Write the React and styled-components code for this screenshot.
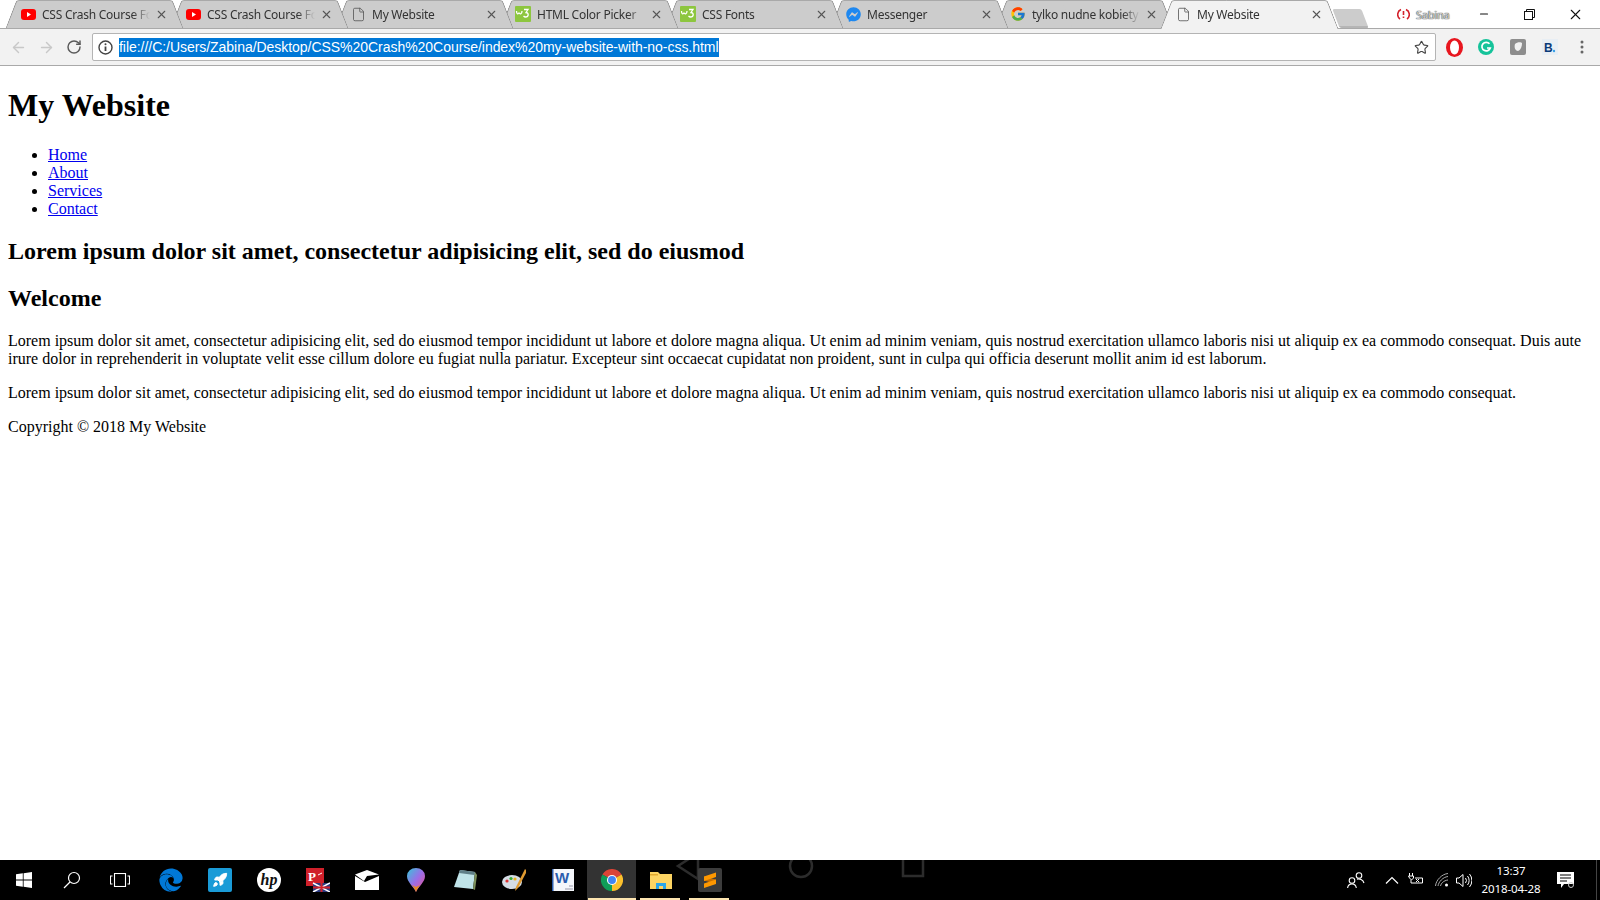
import React from 'react';
import styled, { createGlobalStyle } from 'styled-components';
import { ArrowLeft, ArrowRight, RotateCw, Star, X, File, Minus, Rocket } from 'lucide-react';
import { FcGoogle } from 'react-icons/fc';
import { FaFacebookMessenger, FaEdge } from 'react-icons/fa';

const GlobalStyle = createGlobalStyle`
    html, body { margin: 0; padding: 0; background: #fff; }
    body { font-family: "Liberation Serif", "Times New Roman", serif; font-size: 16px; color: #000; }
`;

const Screen = styled.div`
    width: 1600px;
    height: 900px;
    display: flex;
    flex-direction: column;
    overflow: hidden;
`;

const TabStrip = styled.div`
    height: 28px;
    flex: none;
    display: flex;
    align-items: flex-start;
    padding-left: 6px;
    background: #fff;
    border-bottom: 1px solid #a9a9a9;
`;

const Tab = styled.div`
    position: relative;
    z-index: ${(p) => p.$z};
    width: 177px;
    height: ${(p) => (p.$active ? 29 : 28)}px;
    margin-right: -12px;
    flex: none;
    display: flex;
    align-items: center;
    padding: 0 0 0 14px;
    box-sizing: border-box;
    font-family: "Noto Sans", "Open Sans", sans-serif;
    font-size: 12px;
    color: #333;

    &::before, &::after {
        content: '';
        position: absolute;
        top: 0;
        bottom: 0;
        z-index: -1;
        background: ${(p) => (p.$active ? '#f2f2f2' : '#cccccc')};
        border-top: 1px solid #a9a9a9;
        box-sizing: border-box;
    }
    &::before {
        left: 5px;
        right: 40%;
        transform: skewX(-21deg);
        border-left: 1px solid #8c8c8c;
        border-top-left-radius: 3px;
    }
    &::after {
        right: 5px;
        left: 40%;
        transform: skewX(21deg);
        border-right: 1px solid #8c8c8c;
        border-top-right-radius: 3px;
    }
`;

const TabIcon = styled.span`
    width: 16px;
    height: 16px;
    flex: none;
    display: flex;
    align-items: center;
    justify-content: center;
`;

const TabTitle = styled.span`
    width: 108px;
    margin-left: 6px;
    white-space: nowrap;
    overflow: hidden;
    letter-spacing: -0.25px;
    mask-image: linear-gradient(to right, #000 84%, transparent 100%);
`;

const TabClose = styled(X)`
    margin-left: 5px;
    flex: none;
    color: #555;
`;

const NewTab = styled.div`
    width: 29px;
    height: 17px;
    flex: none;
    margin: 9px 0 0 10px;
    background: #cccccc;
    border-radius: 2px;
    border-bottom: 2px solid #b5b5b5;
    transform: skewX(21deg);
`;

const Profile = styled.div`
    margin-left: auto;
    display: flex;
    align-items: center;
    gap: 6px;
    height: 28px;
    font-family: "Noto Sans", sans-serif;
    font-size: 11px;
    color: #d8d8d8;
    text-shadow: 0 0 1px #333, 0 0 1px #333;
    letter-spacing: -0.2px;
`;

const WindowControls = styled.div`
    display: flex;
    margin: 0 2px 0 12px;
`;

const WindowButton = styled.div`
    width: 45.5px;
    height: 28px;
    display: flex;
    align-items: center;
    justify-content: center;
    color: #111;
`;

const Toolbar = styled.div`
    height: 36px;
    flex: none;
    display: flex;
    align-items: center;
    padding-left: 4px;
    background: #f2f2f2;
    border-bottom: 1px solid #a9a9a9;
`;

const NavButton = styled.div`
    width: 28px;
    height: 28px;
    flex: none;
    display: flex;
    align-items: center;
    justify-content: center;
    color: ${(p) => (p.$disabled ? '#c8c8c8' : '#5a5a5a')};
`;

const Omnibox = styled.div`
    width: 1344px;
    height: 28px;
    margin-left: 4px;
    flex: none;
    display: flex;
    align-items: center;
    box-sizing: border-box;
    padding: 0 5px;
    background: #fff;
    border: 1px solid #b4b4b4;
    border-radius: 2px;
`;

const UrlText = styled.span`
    margin-left: 6px;
    height: 19px;
    line-height: 19px;
    background: #0078d7;
    color: #fff;
    font-family: "Liberation Sans", Arial, sans-serif;
    font-size: 14px;
    letter-spacing: -0.04px;
    white-space: nowrap;
`;

const StarButton = styled(Star)`
    margin-left: auto;
    color: #444;
    margin-right: 1px;
`;

const Extensions = styled.div`
    flex: 1;
    display: flex;
    align-items: center;
    padding-left: 2px;
`;

const ExtensionSlot = styled.div`
    width: 32px;
    height: 28px;
    flex: none;
    display: flex;
    align-items: center;
    justify-content: center;
`;

const Page = styled.main`
    flex: 1;
    min-height: 0;
    padding: 0 8px;
    display: flow-root;
    background: #fff;
`;

const SiteTitle = styled.h1`
    font-size: 32px;
    margin: 21.44px 0;
`;

const NavList = styled.ul`
    margin: 16px 0;
    padding-left: 40px;
`;

const SectionTitle = styled.h2`
    font-size: 24px;
    margin: 19.92px 0;
`;

const Text = styled.p`
    margin: 16px 0;
`;

const Taskbar = styled.footer`
    position: relative;
    height: 40px;
    flex: none;
    display: flex;
    background: #000;
    overflow: hidden;
`;

const GhostNav = styled.svg`
    position: absolute;
    left: 660px;
    top: 0;
`;

const SystemButton = styled.div`
    width: 48px;
    height: 40px;
    flex: none;
    display: flex;
    align-items: center;
    justify-content: center;
    color: #fff;
`;

const AppCell = styled.div`
    position: relative;
    width: 49px;
    height: 40px;
    flex: none;
    display: flex;
    align-items: center;
    justify-content: center;
    background: ${(p) => (p.$current ? '#333333' : 'transparent')};

    ${(p) => p.$running && `
        &::after {
            content: '';
            position: absolute;
            bottom: 0;
            height: 2px;
            left: ${p.$current ? '1px' : '4px'};
            right: ${p.$current ? '0' : '5px'};
            background: #fde5b0;
        }
    `}
`;

const AppRow = styled.div`
    display: flex;
    margin-left: 2px;
`;

const Tray = styled.div`
    margin-left: auto;
    display: flex;
    align-items: center;
    padding-right: 24px;
    height: 40px;
    color: #fff;
    border-right: 1px solid #000;
`;

const TrayIcon = styled.div`
    margin-left: ${(p) => p.$gap}px;
    flex: none;
    display: flex;
    align-items: center;
`;

const Clock = styled.div`
    width: 70px;
    margin-left: 4px;
    text-align: center;
    font-family: "Noto Sans", sans-serif;
    font-size: 11.5px;
    line-height: 18px;
    color: #fff;
    letter-spacing: -0.1px;
`;

const Edge = styled.div`
    position: absolute;
    right: 3px;
    top: 0;
    bottom: 0;
    width: 1px;
    background: #444;
`;

const YouTube = () => (
    <svg width="15" height="11" viewBox="0 0 15 11">
        <rect width="15" height="11" rx="3" fill="#f00" />
        <path d="M6 3l4 2.500L6 8z" fill="#fff" />
    </svg>
);

const W3 = () => (
    <svg width="16" height="16" viewBox="0 0 16 16">
        <rect width="16" height="16" rx="1" fill="#8dc63f" />
        <path d="M1.500 5c0 3 1.500 3.500 2.500 2 1 1.500 3 1 3-2M9 3.500h4l-2 3c3 0 3 4.500-.5 4.500-1 0-1.500-.5-2-1" fill="none" stroke="#fff" strokeWidth="1.300" />
    </svg>
);

const Doc = () => <File size={15} strokeWidth={1.3} color="#555" />;

const Windows = () => (
    <svg width="16" height="16" viewBox="0 0 16 16" fill="#fff">
        <path d="M0 2.300l6.800-1v6.300H0zM7.600 1.200L16 0v7.600H7.600zM0 8.400h6.800v6.300l-6.800-1zM7.600 8.400H16V16l-8.400-1.200z" />
    </svg>
);

const SearchGlyph = () => (
    <svg width="18" height="18" viewBox="0 0 18 18" fill="none" stroke="#fff" strokeWidth="1.200">
        <circle cx="11" cy="7" r="5.500" />
        <path d="M7 11l-6 6" />
    </svg>
);

const TaskView = () => (
    <svg width="20" height="14" viewBox="0 0 20 14" fill="none" stroke="#fff" strokeWidth="1.100">
        <rect x="4.500" y=".5" width="11" height="13" />
        <path d="M2.500 3H.5v8h2M17.500 3h2v8h-2" />
    </svg>
);

const RocketTile = () => (
    <svg width="24" height="24" viewBox="0 0 24 24">
        <rect width="24" height="24" rx="2" fill="#1a9bd7" />
        <Rocket x="4" y="4" width="16" height="16" color="#fff" fill="#fff" strokeWidth="1.500" />
    </svg>
);

const HpLogo = () => (
    <svg width="24" height="24" viewBox="0 0 24 24">
        <circle cx="12" cy="12" r="12" fill="#fff" />
        <text x="12" y="17" textAnchor="middle" fontFamily="Liberation Serif" fontStyle="italic" fontWeight="700" fontSize="16" fill="#111">hp</text>
    </svg>
);

const RedBook = () => (
    <svg width="24" height="24" viewBox="0 0 24 24">
        <rect x="0" y="0" width="18" height="18" fill="#d0202a" />
        <text x="2" y="13" fontFamily="Liberation Serif" fontWeight="700" fontSize="13" fill="#fff">P</text>
        <path d="M12 7l4-2" stroke="#fff" strokeWidth="1" />
        <rect x="7" y="15" width="17" height="9" fill="#2b3a80" />
        <path d="M7 15l17 9M24 15L7 24" stroke="#fff" strokeWidth="1.500" />
        <path d="M15.500 15v9M7 19.500h17" stroke="#d0202a" strokeWidth="2" />
    </svg>
);

const MailTile = () => (
    <svg width="24" height="20" viewBox="0 0 24 20">
        <path d="M0 6v14h24V6L10 12z" fill="#fff" />
        <path d="M0 4.500L12 0l12 4.500-12 1.500-3 5z" fill="#fff" />
    </svg>
);

const MapsDrop = () => (
    <svg width="18" height="24" viewBox="0 0 18 24">
        <defs>
            <linearGradient id="maps" x1="0" y1="0" x2="1" y2="1">
                <stop offset="0" stopColor="#35c6d8" />
                <stop offset=".5" stopColor="#9a6ee8" />
                <stop offset="1" stopColor="#f0508a" />
            </linearGradient>
        </defs>
        <path d="M9 24C6 18 0 14 0 8a9 8 0 0 1 18 0c0 6-6 10-9 16z" fill="url(#maps)" />
        <path d="M9 24c-1-3-2.500-5-4-7l4 2 4-2c-1.500 2-3 4-4 7z" fill="#e58a20" />
    </svg>
);

const Notepad = () => (
    <svg width="24" height="22" viewBox="0 0 24 22">
        <path d="M7 1l15 2-2 17-19-2z" fill="#bfe3e8" />
        <path d="M7 1l15 2-.5 3L6 4z" fill="#5f7f88" />
        <path d="M20 20l2-17 2 3-2 15z" fill="#7b8f5a" />
    </svg>
);

const Palette = () => (
    <svg width="24" height="24" viewBox="0 0 24 24">
        <ellipse cx="10" cy="14" rx="10" ry="7" fill="#d5dde6" />
        <circle cx="5" cy="13" r="1.600" fill="#d33" />
        <circle cx="9" cy="10.500" r="1.600" fill="#3a3" />
        <circle cx="13" cy="11" r="1.600" fill="#e8b020" />
        <path d="M23 1l-9 18-1 4 3-3 9-17z" fill="#e09a30" />
    </svg>
);

const WordDoc = () => (
    <svg width="22" height="22" viewBox="0 0 22 22">
        <rect width="22" height="22" fill="#f4f6fb" />
        <rect width="1.500" height="22" fill="#2a5cae" />
        <text x="10" y="14" textAnchor="middle" fontFamily="Liberation Sans" fontWeight="700" fontSize="15" fill="#2a5cae">W</text>
        <path d="M17 17h4M13 20h8" stroke="#99a" strokeWidth="1" />
    </svg>
);

const ChromeLogo = ({ size = 22 }) => (
    <svg width={size} height={size} viewBox="0 0 24 24">
        <path d="M12 12L1.600 6a12 12 0 0 1 20.800 0z" fill="#db4437" />
        <path d="M12 12L22.400 6A12 12 0 0 1 12 24z" fill="#fbc02d" />
        <path d="M12 12L12 24A12 12 0 0 1 1.600 6z" fill="#0f9d58" />
        <circle cx="12" cy="12" r="5.500" fill="#fff" />
        <circle cx="12" cy="12" r="4.300" fill="#4285f4" />
    </svg>
);

const Folder = () => (
    <svg width="22" height="18" viewBox="0 0 22 18">
        <path d="M0 1h8l2 2h12v15H0z" fill="#fcd462" />
        <rect y="3" width="8" height="1.500" fill="#e0a82e" />
        <path d="M6 18v-6h10v6h-3v-3H9v3z" fill="#2aa5e8" />
    </svg>
);

const Sublime = () => (
    <svg width="24" height="24" viewBox="0 0 24 24">
        <rect width="24" height="24" rx="2" fill="#3c3c3c" />
        <path d="M6 8.500L18 11.500V16L6 12.500z" fill="#c96f00" />
        <path d="M6 8.500L18 4.500V9L6 13zM6 15.500L18 11.500V16L6 20z" fill="#ff9800" />
    </svg>
);

const People = () => (
    <svg width="18" height="17" viewBox="0 0 18 17" fill="none" stroke="#fff" strokeWidth="1.100">
        <circle cx="5" cy="8.500" r="2.800" />
        <path d="M.6 16c.3-2.500 2-4 4.400-4s4 1.500 4.300 4" />
        <circle cx="12" cy="3.500" r="2.800" />
        <path d="M10 7.200c2.500-.6 6 .3 7 3.800" />
    </svg>
);

const Chevron = () => (
    <svg width="14" height="8" viewBox="0 0 14 8" fill="none" stroke="#fff" strokeWidth="1.200">
        <path d="M1 7.500l6-6 6 6" />
    </svg>
);

const Battery = () => (
    <svg width="16" height="16" viewBox="0 0 16 16" fill="none" stroke="#fff" strokeWidth="1">
        <path d="M1.500 1v3M4.500 1v3M.5 4h5v2l-2 2-2-2z" />
        <path d="M3 8v3h11.500V6H7" />
        <path d="M8 7l3 3M11 7l-3 3" />
    </svg>
);

const Wifi = () => (
    <svg width="14" height="14" viewBox="0 0 14 14" fill="none" stroke="#bbb" strokeWidth=".9">
        <path d="M.5 13C1 7 7 1 13 .5M3 13c.5-4 5-9 10-9.500M5.500 13c.5-2.500 3-5.500 7.500-6" />
        <circle cx="11.500" cy="12" r="1.500" fill="#fff" stroke="none" />
    </svg>
);

const Speaker = () => (
    <svg width="16" height="15" viewBox="0 0 16 15" fill="none" stroke="#fff" strokeWidth="1">
        <path d="M.5 5v5h2.500L7 13.500v-12L3 5z" />
        <path d="M9.500 5a4 4 0 0 1 0 5M11.500 3a7 7 0 0 1 0 9M13.500 1a10 10 0 0 1 0 13" />
    </svg>
);

const ActionCenter = () => (
    <svg width="18" height="17" viewBox="0 0 18 17">
        <path d="M0 0h17v12H7l-3 4v-4H0z" fill="#fff" />
        <path d="M3 3h11M3 6h11M3 9h7" stroke="#000" strokeWidth="1" />
        <circle cx="14" cy="13" r="2.500" fill="none" stroke="#ccc" strokeWidth="1" />
    </svg>
);

const OperaBlock = () => (
    <svg width="17" height="19" viewBox="0 0 17 19">
        <ellipse cx="8.500" cy="9.500" rx="8.500" ry="9.500" fill="#e8161f" />
        <ellipse cx="8.500" cy="9.500" rx="4.500" ry="7" fill="#fff" />
    </svg>
);

const Grammarly = () => (
    <svg width="16" height="16" viewBox="0 0 16 16">
        <circle cx="8" cy="8" r="8" fill="#15c39a" />
        <path d="M11.500 4.800A4.300 4.300 0 1 0 12.300 9H9" fill="none" stroke="#fff" strokeWidth="1.700" />
    </svg>
);

const GreyExt = () => (
    <svg width="16" height="16" viewBox="0 0 16 16">
        <rect width="16" height="16" rx="2" fill="#8d8d8d" />
        <path d="M5 5c2-2 6-2 7-1 0 3-1 7-4 8-3 0-4-4-3-7z" fill="#f0f0f0" />
    </svg>
);

const BookingExt = () => (
    <svg width="16" height="16" viewBox="0 0 16 16">
        <rect width="16" height="16" fill="#e8eef4" />
        <text x="2" y="13" fontFamily="Liberation Sans" fontWeight="700" fontSize="12" fill="#0a3a78">B</text>
        <circle cx="12" cy="12" r="1.200" fill="#3aa0e8" />
    </svg>
);

const MoreDots = () => (
    <svg width="4" height="14" viewBox="0 0 4 14" fill="#666">
        <circle cx="2" cy="2" r="1.500" />
        <circle cx="2" cy="7" r="1.500" />
        <circle cx="2" cy="12" r="1.500" />
    </svg>
);

const InfoMark = () => (
    <svg width="15" height="15" viewBox="0 0 15 15">
        <circle cx="7.500" cy="7.500" r="6.500" fill="none" stroke="#444" strokeWidth="1.400" />
        <path d="M7.500 6.500v4.500" stroke="#444" strokeWidth="1.800" />
        <circle cx="7.500" cy="4.300" r="1" fill="#444" />
    </svg>
);

const Disconnected = () => (
    <svg width="13" height="13" viewBox="0 0 13 13" fill="none" stroke="#d3202a" strokeWidth="1.600">
        <path d="M4 1.500A5.500 5.500 0 0 0 3 11M9 1.500A5.500 5.500 0 0 1 10 11" />
        <path d="M6.500 3v4M6.500 8.500v1.500" />
    </svg>
);

const RestoreGlyph = () => (
    <svg width="11" height="11" viewBox="0 0 11 11" fill="none" stroke="#111">
        <rect x=".5" y="2.500" width="8" height="8" />
        <path d="M2.500 2.500v-2h8v8h-2" />
    </svg>
);

const tabs = [
    { title: 'CSS Crash Course For Absolute', icon: <YouTube /> },
    { title: 'CSS Crash Course For Absolute', icon: <YouTube /> },
    { title: 'My Website', icon: <Doc /> },
    { title: 'HTML Color Picker', icon: <W3 /> },
    { title: 'CSS Fonts', icon: <W3 /> },
    { title: 'Messenger', icon: <FaFacebookMessenger size={15} color="#1e88f0" /> },
    { title: 'tylko nudne kobiety', icon: <FcGoogle size={16} /> },
    { title: 'My Website', icon: <Doc />, active: true },
];

const apps = [
    { id: 'edge', icon: <FaEdge size={24} color="#0078d7" /> },
    { id: 'rocket', icon: <RocketTile /> },
    { id: 'hp', icon: <HpLogo /> },
    { id: 'book', icon: <RedBook /> },
    { id: 'mail', icon: <MailTile /> },
    { id: 'maps', icon: <MapsDrop /> },
    { id: 'notepad', icon: <Notepad /> },
    { id: 'paint', icon: <Palette /> },
    { id: 'word', icon: <WordDoc /> },
    { id: 'chrome', icon: <ChromeLogo />, running: true, current: true },
    { id: 'files', icon: <Folder />, running: true },
    { id: 'sublime', icon: <Sublime />, running: true },
];

export default function App() {
    return (
        <Screen>
            <GlobalStyle />
            <TabStrip>
                {tabs.map((tab, i) => (
                    <Tab key={i} $active={tab.active} $z={tab.active ? 30 : 20 - i}>
                        <TabIcon>{tab.icon}</TabIcon>
                        <TabTitle>{tab.title}</TabTitle>
                        <TabClose size={13} strokeWidth={2} />
                    </Tab>
                ))}
                <NewTab />
                <Profile>
                    <Disconnected />
                    <span>Sabina</span>
                </Profile>
                <WindowControls>
                    <WindowButton><Minus size={12} strokeWidth={2.2} /></WindowButton>
                    <WindowButton><RestoreGlyph /></WindowButton>
                    <WindowButton><X size={17} strokeWidth={1.5} /></WindowButton>
                </WindowControls>
            </TabStrip>

            <Toolbar>
                <NavButton $disabled><ArrowLeft size={17} /></NavButton>
                <NavButton $disabled><ArrowRight size={17} /></NavButton>
                <NavButton><RotateCw size={16} strokeWidth={2.2} /></NavButton>
                <Omnibox>
                    <InfoMark />
                    <UrlText>file:///C:/Users/Zabina/Desktop/CSS%20Crash%20Course/index%20my-website-with-no-css.html</UrlText>
                    <StarButton size={15} strokeWidth={1.8} />
                </Omnibox>
                <Extensions>
                    <ExtensionSlot><OperaBlock /></ExtensionSlot>
                    <ExtensionSlot><Grammarly /></ExtensionSlot>
                    <ExtensionSlot><GreyExt /></ExtensionSlot>
                    <ExtensionSlot><BookingExt /></ExtensionSlot>
                    <ExtensionSlot><MoreDots /></ExtensionSlot>
                </Extensions>
            </Toolbar>

            <Page>
                <SiteTitle>My Website</SiteTitle>
                <NavList>
                    <li><a href="#home">Home</a></li>
                    <li><a href="#about">About</a></li>
                    <li><a href="#services">Services</a></li>
                    <li><a href="#contact">Contact</a></li>
                </NavList>
                <SectionTitle>Lorem ipsum dolor sit amet, consectetur adipisicing elit, sed do eiusmod</SectionTitle>
                <SectionTitle>Welcome</SectionTitle>
                <Text>Lorem ipsum dolor sit amet, consectetur adipisicing elit, sed do eiusmod tempor incididunt ut labore et dolore magna aliqua. Ut enim ad minim veniam, quis nostrud exercitation ullamco laboris nisi ut aliquip ex ea commodo consequat. Duis aute irure dolor in reprehenderit in voluptate velit esse cillum dolore eu fugiat nulla pariatur. Excepteur sint occaecat cupidatat non proident, sunt in culpa qui officia deserunt mollit anim id est laborum.</Text>
                <Text>Lorem ipsum dolor sit amet, consectetur adipisicing elit, sed do eiusmod tempor incididunt ut labore et dolore magna aliqua. Ut enim ad minim veniam, quis nostrud exercitation ullamco laboris nisi ut aliquip ex ea commodo consequat.</Text>
                <Text>Copyright © 2018 My Website</Text>
            </Page>

            <Taskbar>
                <GhostNav width="270" height="40" viewBox="0 0 270 40" fill="none" stroke="#2c2c2c" strokeWidth="2.500">
                    <path d="M38 -4V19L18 6 38 -7" />
                    <circle cx="141" cy="6" r="11" />
                    <path d="M243 -5V16H263V-5" />
                </GhostNav>
                <SystemButton><Windows /></SystemButton>
                <SystemButton><SearchGlyph /></SystemButton>
                <SystemButton><TaskView /></SystemButton>
                <AppRow>
                    {apps.map((app) => (
                        <AppCell key={app.id} $running={app.running} $current={app.current}>{app.icon}</AppCell>
                    ))}
                </AppRow>
                <Tray>
                    <TrayIcon $gap={0}><People /></TrayIcon>
                    <TrayIcon $gap={20}><Chevron /></TrayIcon>
                    <TrayIcon $gap={9}><Battery /></TrayIcon>
                    <TrayIcon $gap={11}><Wifi /></TrayIcon>
                    <TrayIcon $gap={7}><Speaker /></TrayIcon>
                    <Clock>13:37<br />2018-04-28</Clock>
                    <TrayIcon $gap={11}><ActionCenter /></TrayIcon>
                </Tray>
                <Edge />
            </Taskbar>
        </Screen>
    );
}
